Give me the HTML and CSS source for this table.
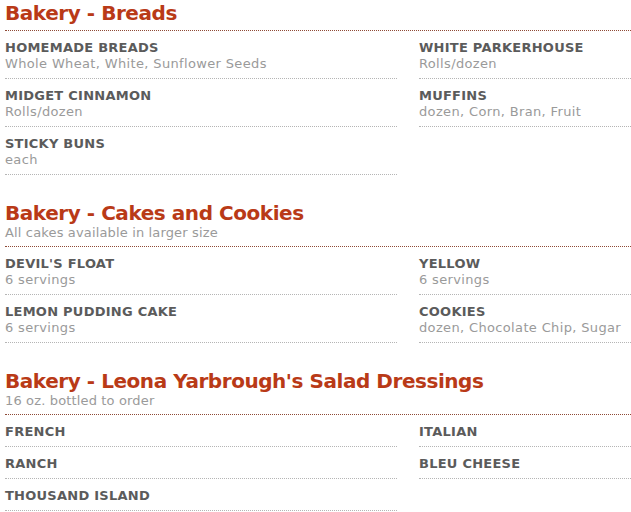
FILE: index.html
```html
<!DOCTYPE html>
<html lang="en">
<head>
<meta charset="utf-8">
<title>Bakery Menu</title>
<link rel="stylesheet" href="styles.css">
</head>
<body>
<main class="menu">
  <section class="section">
    <header class="section-head">
      <h2 class="section-title">Bakery - Breads</h2>
    </header>
    <div class="items">
      <div class="item"><div class="item-name">HOMEMADE BREADS</div><div class="item-desc">Whole Wheat, White, Sunflower Seeds</div></div>
      <div class="item"><div class="item-name">WHITE PARKERHOUSE</div><div class="item-desc">Rolls/dozen</div></div>
      <div class="item"><div class="item-name">MIDGET CINNAMON</div><div class="item-desc">Rolls/dozen</div></div>
      <div class="item"><div class="item-name">MUFFINS</div><div class="item-desc">dozen, Corn, Bran, Fruit</div></div>
      <div class="item"><div class="item-name">STICKY BUNS</div><div class="item-desc">each</div></div>
    </div>
  </section>

  <section class="section">
    <header class="section-head">
      <h2 class="section-title">Bakery - Cakes and Cookies</h2>
      <p class="section-sub">All cakes available in larger size</p>
    </header>
    <div class="items">
      <div class="item"><div class="item-name">DEVIL'S FLOAT</div><div class="item-desc">6 servings</div></div>
      <div class="item"><div class="item-name">YELLOW</div><div class="item-desc">6 servings</div></div>
      <div class="item"><div class="item-name">LEMON PUDDING CAKE</div><div class="item-desc">6 servings</div></div>
      <div class="item"><div class="item-name">COOKIES</div><div class="item-desc">dozen, Chocolate Chip, Sugar</div></div>
    </div>
  </section>

  <section class="section">
    <header class="section-head">
      <h2 class="section-title">Bakery - Leona Yarbrough's Salad Dressings</h2>
      <p class="section-sub">16 oz. bottled to order</p>
    </header>
    <div class="items">
      <div class="item"><div class="item-name">FRENCH</div></div>
      <div class="item"><div class="item-name">ITALIAN</div></div>
      <div class="item"><div class="item-name">RANCH</div></div>
      <div class="item"><div class="item-name">BLEU CHEESE</div></div>
      <div class="item"><div class="item-name">THOUSAND ISLAND</div></div>
    </div>
  </section>
</main>
</body>
</html>
```

FILE: styles.css
```css
* { box-sizing: border-box; }

html, body {
  margin: 0;
  padding: 0;
  background: #ffffff;
}

body {
  font-family: "DejaVu Sans", Verdana, sans-serif;
  overflow: hidden;
}

.menu {
  padding: 1px 0 0 5px;
  display: flex;
  flex-direction: column;
  gap: 26px;
}

.section-head {
  padding-bottom: 5px;
  border-bottom: 1px dotted #8e4a36;
}

.section-title {
  margin: 0;
  font-size: 20px;
  line-height: 24px;
  font-weight: bold;
  letter-spacing: -0.45px;
  color: #b93a17;
}

.section-sub {
  margin: 0;
  font-size: 13px;
  line-height: 16px;
  letter-spacing: 0.15px;
  color: #9a9a9a;
}

.items {
  display: grid;
  grid-template-columns: 392px 1fr;
  column-gap: 22px;
}

.item {
  padding: 9px 0 6px 0;
  border-bottom: 1px dotted #b5b5b5;
}

.item-name {
  font-size: 13px;
  line-height: 16px;
  font-weight: bold;
  letter-spacing: 0.25px;
  color: #5b5b5b;
}

.item-desc {
  font-size: 13px;
  line-height: 16px;
  letter-spacing: 0.35px;
  color: #9a9a9a;
}
```
